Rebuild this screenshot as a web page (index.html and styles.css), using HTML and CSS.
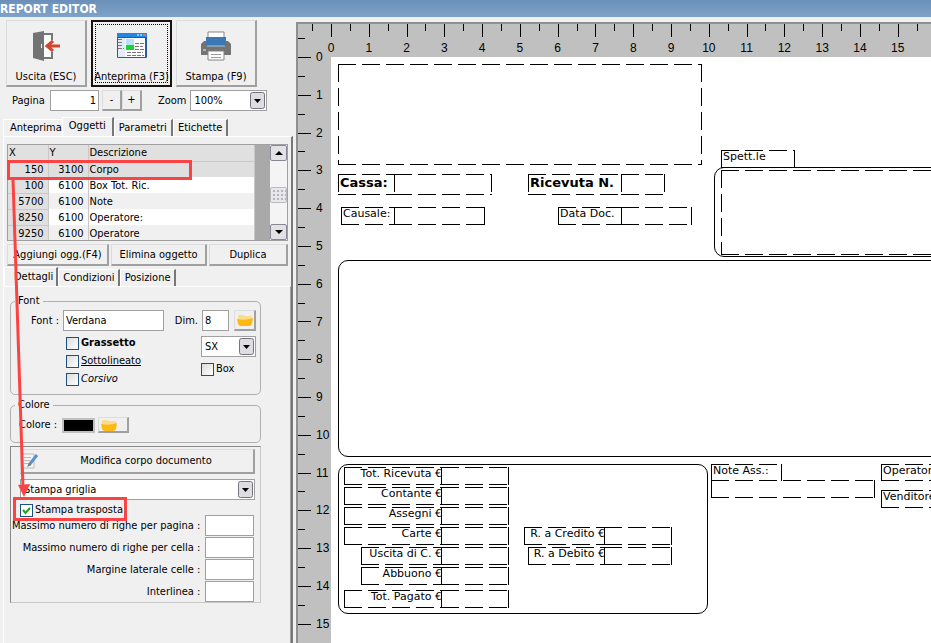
FILE: index.html
```
<!DOCTYPE html>
<html lang="it">
<head>
    <meta charset="UTF-8">
    <meta name="viewport" content="width=device-width, initial-scale=1.0">
    <title>Report Editor</title>
    <link rel="stylesheet" href="styles.css">
</head>
<body>
    <header class="title-bar">REPORT EDITOR</header>
    <main class="editor">
        <aside class="sidebar">
            <div class="toolbar">
                <button class="tool-button">
                    <svg width="30" height="32" viewBox="0 0 30 32">
                        <path d="M12 4h9v6M21 22v6h-9" fill="none" stroke="#777" stroke-width="2"/>
                        <path d="M12 5h8v22h-8z" fill="#fafafa"/>
                        <path d="M2 3l11-2v30L2 28z" fill="#737373"/>
                        <path d="M10 14h1v4h-1z" fill="#eee"/>
                        <path d="M29 16H17M22 11l-6 5 6 5" fill="none" stroke="#d0452e" stroke-width="3"/>
                    </svg>
                    <span>Uscita (ESC)</span>
                </button>
                <button class="tool-button focused">
                    <svg width="30" height="32" viewBox="0 0 30 32">
                        <rect x="0" y="3" width="30" height="25" rx="1" fill="#2a5b9c"/>
                        <rect x="0" y="3" width="30" height="4" fill="#2187e5"/>
                        <path d="M20 4h2v2h-2zM23 4h2v2h-2z" fill="#8ec5fa"/>
                        <path d="M26 4h3v2h-3z" fill="#e0715d"/>
                        <path d="M1 8h7v19H1z" fill="#e4edf7"/>
                        <path d="M8 8h20v19H8z" fill="#fff"/>
                        <path d="M9 9h8v6H9z" fill="#b6e3f5"/>
                        <path d="M9 15h8v5H9z" fill="#18d62c"/>
                        <path d="M1 9.500h4M1 12.500h5M1 15.500h4M1 18.500h6M18 13.500h9M18 16.500h8M18 19.500h9M10 22.500h16M10 25.500h17" stroke="#777" stroke-dasharray="4 1"/>
                    </svg>
                    <span>Anteprima (F3)</span>
                </button>
                <button class="tool-button">
                    <svg width="32" height="32" viewBox="0 0 32 32">
                        <path d="M8 2h16v10H8z" fill="#fff" stroke="#858585"/>
                        <path d="M4 11h24l3 3v11H1V14z" fill="#737373"/>
                        <path d="M6 7h20v9H6z" fill="#3b78b5"/>
                        <path d="M7 16h18" stroke="#a9c7e3"/>
                        <path d="M3 20h3" stroke="#eee"/>
                        <path d="M8 21h16v9H8z" fill="#fff" stroke="#858585"/>
                        <path d="M11 24.500h10M11 27.500h10" stroke="#999"/>
                    </svg>
                    <span>Stampa (F9)</span>
                </button>
            </div>

            <div class="page-row">
                <label for="pagina">Pagina</label>
                <input id="pagina" class="text-box page-input" type="text" value="1">
                <button class="button step-button">-</button>
                <button class="button step-button">+</button>
                <label class="zoom-label" for="zoom">Zoom</label>
                <select id="zoom" class="combo zoom-combo"><option>100%</option></select>
            </div>

            <nav class="tabs main-tabs">
                <button class="tab">Anteprima</button>
                <button class="tab active">Oggetti</button>
                <button class="tab">Parametri</button>
                <button class="tab">Etichette</button>
            </nav>
            <section class="tab-page">
                <div class="object-list">
                    <table class="object-table">
                        <thead>
                            <tr><th class="col-x">X</th><th class="col-y">Y</th><th>Descrizione</th></tr>
                        </thead>
                        <tbody>
                            <tr class="selected"><td>150</td><td>3100</td><td>Corpo</td></tr>
                            <tr><td>100</td><td>6100</td><td>Box Tot. Ric.</td></tr>
                            <tr><td>5700</td><td>6100</td><td>Note</td></tr>
                            <tr><td>8250</td><td>6100</td><td>Operatore:</td></tr>
                            <tr><td>9250</td><td>6100</td><td>Operatore</td></tr>
                        </tbody>
                    </table>
                    <div class="scrollbar">
                        <button class="scroll-button" aria-label="Su"><svg width="8" height="4"><path d="M0 4l4-4 4 4z"/></svg></button>
                        <div class="scroll-thumb"></div>
                        <button class="scroll-button" aria-label="Giù"><svg width="8" height="4"><path d="M0 0l4 4 4-4z"/></svg></button>
                    </div>
                </div>
                <div class="list-actions">
                    <button class="button">Aggiungi ogg.(F4)</button>
                    <button class="button">Elimina oggetto</button>
                    <button class="button">Duplica</button>
                </div>

                <nav class="tabs detail-tabs">
                    <button class="tab active">Dettagli</button>
                    <button class="tab">Condizioni</button>
                    <button class="tab">Posizione</button>
                </nav>
                <div class="detail-page">
                    <fieldset class="group font-group">
                        <legend>Font</legend>
                        <div class="font-left">
                            <div class="field-row">
                                <label for="font">Font :</label>
                                <input id="font" class="text-box font-input" type="text" value="Verdana">
                            </div>
                            <div class="check-list">
                                <label class="check bold"><input type="checkbox">Grassetto</label>
                                <label class="check underline"><input type="checkbox">Sottolineato</label>
                                <label class="check italic"><input type="checkbox">Corsivo</label>
                            </div>
                        </div>
                        <div class="font-right">
                            <div class="field-row">
                                <label class="size-label" for="dim">Dim.</label>
                                <input id="dim" class="text-box size-input" type="text" value="8">
                                <button class="button folder-button" aria-label="Scegli font">
                                    <svg width="16" height="12" viewBox="0 0 16 12"><path d="M1 1h6l1 1h7v5H1z" fill="#fbdc8d"/><path d="M0 5q8 2 16-1l-1 6q-1 2-3 2H4q-2 0-3-2z" fill="#fdb913"/></svg>
                                </button>
                            </div>
                            <div class="align-box">
                                <select class="combo align-combo" aria-label="Allineamento"><option>SX</option></select>
                                <label class="check"><input type="checkbox">Box</label>
                            </div>
                        </div>
                    </fieldset>

                    <fieldset class="group color-group">
                        <legend>Colore</legend>
                        <span>Colore :</span>
                        <span class="swatch"></span>
                        <button class="button color-button" aria-label="Scegli colore">
                            <svg width="16" height="12" viewBox="0 0 16 12"><path d="M1 1h6l1 1h7v5H1z" fill="#fbdc8d"/><path d="M0 5q8 2 16-1l-1 6q-1 2-3 2H4q-2 0-3-2z" fill="#fdb913"/></svg>
                        </button>
                    </fieldset>

                    <div class="body-options">
                        <button class="button edit-button">
                            <svg width="18" height="16" viewBox="0 0 18 16">
                                <path d="M1 1h12v14H1z" fill="#f4f4f4" stroke="#bbb"/>
                                <path d="M3 4.500h7M3 7.500h6M3 10.500h4" stroke="#bbb"/>
                                <path d="M16 2l-8 10" stroke="#5d92c9" stroke-width="3"/>
                                <path d="M8 10l-2 4 4-2z" fill="#777"/>
                            </svg>
                            <span>Modifica corpo documento</span>
                        </button>
                        <select class="combo print-combo" aria-label="Tipo di stampa"><option>Stampa griglia</option></select>
                        <label class="check transposed"><input type="checkbox" checked>Stampa trasposta</label>
                        <div class="limits">
                            <label for="righe-pagina">Massimo numero di righe per pagina :</label>
                            <input id="righe-pagina" class="text-box" type="text">
                            <label for="righe-cella">Massimo numero di righe per cella :</label>
                            <input id="righe-cella" class="text-box" type="text">
                            <label for="margine">Margine laterale celle :</label>
                            <input id="margine" class="text-box" type="text">
                            <label for="interlinea">Interlinea :</label>
                            <input id="interlinea" class="text-box" type="text">
                        </div>
                    </div>
                </div>
            </section>
        </aside>

        <section class="preview">
            <ol class="ruler ruler-top"></ol>
            <ol class="ruler ruler-left"></ol>
            <div class="sheet"></div>
        </section>

        <!-- callout: selected row -> transposed print option -->
        <svg class="callout" width="200" height="530">
            <g fill="none" stroke="#fb4343" stroke-width="3">
                <rect x="8.500" y="144.500" width="182" height="17"/>
                <rect x="14.500" y="481.500" width="111" height="21"/>
                <path d="M13 162l10 309"/>
            </g>
            <path d="M18 468l12-1-6 13z" fill="#fb4343"/>
        </svg>
    </main>
    <script src="report.js"></script>
</body>
</html>
```
FILE: styles.css
```
* {
    box-sizing: border-box;
}
body {
    margin: 0;
    height: 100vh;
    display: flex;
    flex-direction: column;
    overflow: hidden;
    background: #f0f0f0;
    color: #000;
    font: 11px/14px "DejaVu Sans Condensed", Tahoma, sans-serif;
}
button, input, select {
    margin: 0;
    font: inherit;
    color: inherit;
}
.title-bar {
    height: 17px;
    flex: none;
    background: linear-gradient(#6a90ba, #7fa2c8);
    color: #fff;
    font-size: 12px;
    font-weight: bold;
    line-height: 18px;
}
.editor {
    position: relative;
    flex: 1;
    min-height: 0;
    display: flex;
}
.sidebar {
    width: 296px;
    flex: none;
    display: flex;
    flex-direction: column;
    padding: 3px 3px 0 3px;
}

/* raised buttons */
.button, .tool-button {
    padding: 0;
    background: #f0f0f0;
    border: 1px solid #dcdcdc;
    border-right: 2px solid #a0a0a0;
    border-bottom: 2px solid #a0a0a0;
    border-radius: 0;
    white-space: nowrap;
}
.toolbar {
    display: flex;
    gap: 4px;
    padding-left: 3px;
}
.tool-button {
    width: 81px;
    height: 67px;
    display: flex;
    flex-direction: column;
    align-items: center;
    justify-content: space-between;
    padding: 9px 0 1px;
}
.tool-button.focused {
    padding-top: 8px;
    border: 2px solid #1a1212;
    outline: 1px dotted #000;
    outline-offset: -5px;
}
.page-row {
    display: flex;
    align-items: center;
    margin-top: 3px;
    padding-left: 9px;
}
.text-box {
    height: 21px;
    padding: 0 2px;
    background: #fff;
    border: 1px solid #a0a0a0;
    border-radius: 0;
}
.page-input {
    width: 49px;
    margin: 0 3px 0 5px;
    text-align: right;
}
.step-button {
    width: 20px;
    height: 21px;
}
.zoom-label {
    margin-left: 16px;
}
.combo {
    appearance: none;
    height: 21px;
    padding: 0 20px 0 3px;
    border: 1px solid #a0a0a0;
    border-radius: 0;
    background: #fff url("data:image/svg+xml,%3Csvg xmlns='http://www.w3.org/2000/svg' width='15' height='17'%3E%3Crect x='.5' y='.5' width='14' height='16' rx='2' fill='%23dddde2' stroke='%23747480'/%3E%3Cpath d='M4 7h7l-3.500 4z'/%3E%3C/svg%3E") no-repeat right 1px center;
}
.zoom-combo {
    width: 77px;
    margin-left: 4px;
}

/* tabs */
.tabs {
    display: flex;
    align-items: flex-end;
}
.main-tabs {
    margin-top: 6px;
}
.tab {
    height: 17px;
    padding: 0 4px;
    background: #f0f0f0;
    border: 1px solid #fff;
    border-right: 2px solid #777;
    border-bottom: 0;
    white-space: nowrap;
}
.tab:first-child:not(.active) {
    padding: 0 0 0 6px;
    border-right: 0;
}
.tab.active {
    height: 19px;
    padding: 0 6px 2px;
}
.tab-page {
    flex: 1;
    min-height: 0;
    display: flex;
    flex-direction: column;
    padding: 7px 3px 0 3px;
    border: 1px solid #fff;
    border-right: 2px solid #777;
    border-bottom: 0;
}

/* object list */
.object-list {
    display: flex;
    height: 97px;
    flex: none;
    overflow: hidden;
    background: #a9a9a9;
    border: 1px solid #a0a0a0;
}
.object-table {
    width: 247px;
    border-collapse: collapse;
    table-layout: fixed;
}
.object-table th, .object-table td {
    height: 16px;
    padding: 0 2px 0 1px;
    line-height: 15px;
    font-weight: normal;
    text-align: left;
    border-right: 1px solid #c8c8c8;
}
.object-table th {
    background: #e0e0e0;
    border-bottom: 1px solid #c8c8c8;
}
.col-x, .col-y {
    width: 40px;
}
.object-table tbody tr {
    background: #f0f0f0;
}
.object-table tbody tr:nth-child(even) {
    background: #fff;
}
.object-table td:nth-child(1), .object-table td:nth-child(2) {
    padding-right: 4px;
    text-align: right;
}
.object-table td:first-child {
    background: #e0e0e0;
    border-bottom: 1px solid #c8c8c8;
}
.object-table tbody tr.selected {
    background: #dfdfdf;
}
.scrollbar {
    width: 17px;
    margin-left: auto;
    display: flex;
    flex-direction: column;
    justify-content: space-between;
    background: #f4f4f4;
}
.scroll-button, .scroll-thumb {
    width: 17px;
    height: 16px;
    padding: 0;
    display: flex;
    align-items: center;
    justify-content: center;
    background: #e2e2e6;
    border: 1px solid #888892;
    border-radius: 2px;
}
.scroll-thumb {
    margin-top: 5px;
    background: radial-gradient(#b4b4ba 1px, #e8e8ec 1px) 1px 1px / 4px 4px;
    border-color: #bbb;
}
.list-actions {
    display: grid;
    grid-template-columns: 102px 96px 1fr;
    gap: 2px;
    margin-top: 3px;
}
.list-actions .button {
    height: 22px;
}
.detail-tabs {
    margin: 1px -3px 0;
}
.detail-tabs .tab {
    padding: 0 3px 0 4px;
}
.detail-tabs .active {
    padding: 0 3px 0 9px;
}
.detail-page {
    flex: 1;
    min-height: 0;
    margin: 0 -3px;
    padding: 7px 29px 0 6px;
    border-top: 1px solid #fff;
    border-right: 1px solid #a0a0a0;
}

/* groups */
.group {
    margin: 0;
    min-width: 0;
    border: 1px solid #b0b0b0;
    border-radius: 5px;
}
.group legend {
    padding: 0 3px;
}
.font-group {
    display: flex;
    justify-content: space-between;
    height: 101px;
    padding: 2px 4px 0 20px;
}
.font-group legend {
    margin-left: -16px;
}
.field-row {
    display: flex;
    align-items: center;
}
.font-input {
    width: 101px;
    margin-left: 4px;
}
.check {
    display: flex;
    align-items: center;
    gap: 2px;
    height: 18px;
    white-space: nowrap;
}
.check input {
    appearance: none;
    width: 13px;
    height: 13px;
    border: 1px solid #1d5082;
    background: linear-gradient(135deg, #dcdcd7, #fff);
}
.check input:checked {
    background: #fff url("data:image/svg+xml,%3Csvg xmlns='http://www.w3.org/2000/svg' width='11' height='11'%3E%3Cpath d='M2 5l2.500 3L9 3' fill='none' stroke='%2321a121' stroke-width='2'/%3E%3C/svg%3E");
}
.check-list {
    padding: 3px 0 0 35px;
}
.bold {
    font-weight: bold;
}
.underline {
    text-decoration: underline;
}
.italic {
    font-style: italic;
}
.size-input {
    width: 27px;
    margin: 0 5px 0 4px;
}
.folder-button {
    width: 22px;
    height: 21px;
    display: flex;
    align-items: center;
    justify-content: center;
}
.align-box {
    width: 55px;
    margin: 5px 0 0 auto;
}
.align-combo {
    width: 55px;
    display: block;
    margin-bottom: 3px;
}
.color-group {
    display: flex;
    align-items: center;
    height: 45px;
    margin-top: 3px;
    padding: 0 8px 4px;
}
.color-group legend {
    margin-left: -4px;
}
.swatch {
    width: 33px;
    height: 15px;
    margin: 0 3px 0 5px;
    background: #000;
    border: 2px solid #c0c0c0;
}
.color-button {
    width: 31px;
    height: 16px;
    padding-left: 2px;
}
.color-button svg {
    display: block;
}

/* document body options */
.body-options {
    margin-top: 3px;
    padding: 2px 5px 0 9px;
    border: 1px solid #c8c8c8;
    border-top: 1px solid #888;
    border-left: 1px solid #888;
}
.edit-button {
    width: 100%;
    height: 25px;
    display: flex;
    align-items: center;
}
.edit-button span {
    flex: 1;
    text-align: center;
}
.print-combo {
    display: block;
    width: 100%;
    margin-top: 5px;
}
.transposed {
    margin-top: 1px;
}
.limits {
    display: grid;
    grid-template-columns: 1fr 49px;
    gap: 1px 5px;
    align-items: center;
    margin: -4px 2px 0 -8px;
    text-align: right;
    white-space: nowrap;
}
.limits .text-box {
    width: 49px;
}

/* preview canvas */
.preview {
    flex: 1;
    min-width: 0;
    display: grid;
    grid-template-columns: 33px 1fr;
    grid-template-rows: 33px 1fr;
    margin-top: 5px;
    overflow: hidden;
    background: #c0c0c0;
    border-top: 2px solid #909090;
    border-left: 2px solid #909090;
    font-family: "Liberation Sans", Arial, sans-serif;
    font-size: 12px;
}
.ruler {
    margin: 0;
    padding: 0;
    list-style: none;
    display: flex;
    min-width: 0;
    min-height: 0;
}
.ruler li {
    position: relative;
    flex: none;
}
.ruler li::before, .ruler li::after {
    content: "";
    position: absolute;
    background: #000;
}
.ruler-top {
    grid-column: 2;
}
.ruler-top li {
    width: 1cm;
    margin-left: -0.5cm;
    margin-right: 0.5cm;
    padding-top: 17px;
    text-align: center;
}
.ruler-top li::before {
    left: 50%;
    top: 0;
    width: 1px;
    height: 13px;
}
.ruler-top li::after {
    left: 0;
    top: 0;
    width: 1px;
    height: 7px;
}
.ruler-left {
    grid-row: 2;
    flex-direction: column;
}
.ruler-left li {
    height: 1cm;
    margin-top: -0.5cm;
    margin-bottom: 0.5cm;
    padding: 1px 0 0 18px;
    line-height: 1cm;
}
.ruler-left li::before {
    left: 0;
    top: 50%;
    width: 13px;
    height: 1px;
}
.ruler-left li::after {
    left: 0;
    top: 0;
    width: 7px;
    height: 1px;
}
.sheet {
    position: relative;
    overflow: hidden;
    background: #fff;
    font: 11px/14px "DejaVu Sans", Verdana, sans-serif;
}
.item {
    --dash-x: repeating-linear-gradient(90deg, #000 0 18px, transparent 18px 24px);
    --dash-y: repeating-linear-gradient(#000 0 18px, transparent 18px 24px);
    position: absolute;
    padding: 0 0 0 2px;
    white-space: nowrap;
    background:
        var(--dash-x) top / 100% 1px no-repeat,
        var(--dash-x) bottom / 100% 1px no-repeat,
        var(--dash-y) left / 1px 100% no-repeat,
        var(--dash-y) right / 1px 100% no-repeat;
}
.item.right {
    display: flex;
    justify-content: flex-end;
}
.item.heading {
    font-size: 13px;
    font-weight: bold;
    line-height: 17px;
}
.item.box {
    background: none;
    border: 1px solid #000;
    border-radius: 10px;
}
.callout {
    position: absolute;
    left: 0;
    top: 0;
    pointer-events: none;
}
```
FILE: report.js
```
// x, y, width, height on the sheet, then text and class
var items = [
    [7, 7, 364, 101],
    [7, 117, 57, 21, 'Cassa:', 'heading'],
    [63, 117, 98, 21],
    [197, 117, 94, 21, 'Ricevuta N.', 'heading'],
    [290, 117, 44, 21],
    [10, 150, 54, 18, 'Causale:'],
    [63, 150, 91, 18],
    [227, 150, 64, 18, 'Data Doc.'],
    [290, 150, 71, 18],
    [390, 93, 74, 18, 'Spett.le'],
    [383, 110, 364, 90, '', 'box'],
    [390, 113, 350, 85],
    [7, 203, 740, 197, '', 'box'],
    [7, 407, 370, 150, '', 'box'],
    [13, 410, 98, 18, 'Tot. Ricevuta €', 'right'],
    [110, 410, 68, 18],
    [13, 430, 98, 18, 'Contante €', 'right'],
    [110, 430, 68, 18],
    [13, 450, 98, 18, 'Assegni €', 'right'],
    [110, 450, 68, 18],
    [13, 470, 98, 18, 'Carte €', 'right'],
    [110, 470, 68, 18],
    [30, 490, 81, 18, 'Uscita di C. €', 'right'],
    [110, 490, 68, 18],
    [30, 510, 81, 18, 'Abbuono €', 'right'],
    [110, 510, 68, 18],
    [13, 533, 98, 18, 'Tot. Pagato €', 'right'],
    [110, 533, 68, 18],
    [193, 470, 81, 18, 'R. a Credito €', 'right'],
    [273, 470, 68, 18],
    [197, 490, 77, 18, 'R. a Debito €', 'right'],
    [273, 490, 68, 18],
    [380, 407, 71, 17, 'Note Ass.:'],
    [380, 423, 164, 18],
    [550, 407, 76, 17, 'Operatore:'],
    [550, 433, 76, 18, 'Venditore:']
]

// numbers are written up to lastLabel, the marks go on to the end
function drawRuler( selector, count, lastLabel ) {
    var ruler = document.querySelector( selector )
    for( var i = 0; i <= count; i++ ) {
        var mark = document.createElement( 'li' )
        mark.textContent = i <= lastLabel ? i : ''
        ruler.appendChild( mark )
    }
}

function drawItems() {
    var sheet = document.querySelector( '.sheet' )
    items.forEach( function( item ) {
        var node = document.createElement( 'div' )
        node.className = 'item ' + ( item[ 5 ] || '' )
        node.style.left = item[ 0 ] + 'px'
        node.style.top = item[ 1 ] + 'px'
        node.style.width = item[ 2 ] + 'px'
        node.style.height = item[ 3 ] + 'px'
        node.textContent = item[ 4 ] || ''
        sheet.appendChild( node )
    } )
}

drawRuler( '.ruler-top', 21, 15 )
drawRuler( '.ruler-left', 29, 15 )
drawItems()
```
